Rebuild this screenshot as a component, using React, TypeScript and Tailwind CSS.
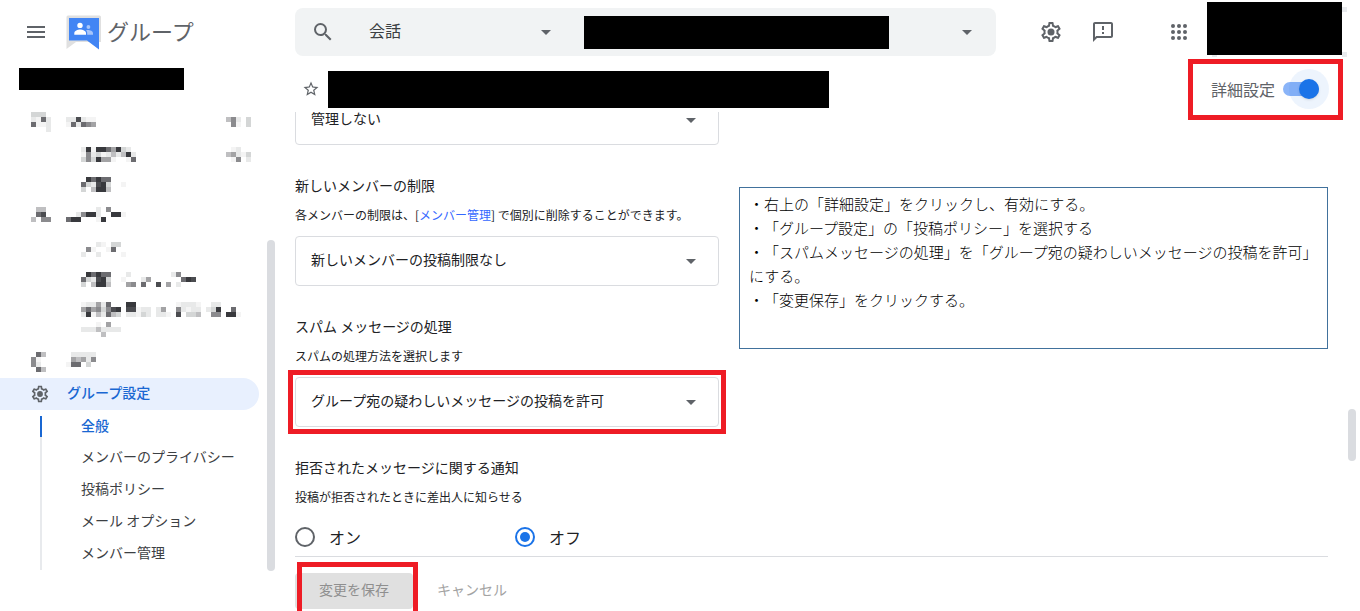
import { useState } from 'react';
import type { ReactNode } from 'react';
import { MdArrowDropDown, MdMenu, MdOutlineSmsFailed, MdSearch, MdStarBorder } from 'react-icons/md';

// [row, column, shades] - one run of 5px cells, '.' leaves a cell empty
type Run = [number, number, string];

const SHADES: Record<string, string> = {
  '1': '#f4f4f4',
  '2': '#e8e9e9',
  '3': '#d4d6d6',
  '4': '#bfbfc1',
  '5': '#a3a3a5',
  '6': '#8b8b8e',
  '7': '#6c6c70',
  '8': '#4b4c50',
  '9': '#38393d',
};

const hiddenTop: Run[][] = [
  [
    [0, 0, '333'], [1, 0, '2172'], [2, 0, '7112'], [3, 3, '2'],
    [1, 7, '228211'], [2, 7, '172765'], [1, 39, '462.3'], [2, 40, '61.3'],
  ],
  [
    [1, 10, '2919975932'], [2, 10, '16231242492'], [3, 10, '3639551..17'],
    [1, 40, '12'], [2, 39, '45213'], [3, 40, '16.2'],
  ],
  [[1, 11, '97977'], [2, 10, '732893..1'], [3, 10, '3.4994']],
  [
    [1, 1, '44'], [2, 1, '78'], [3, 0, '4.66'],
    [1, 13, '2.6'], [2, 9, '26992..991'], [3, 7, '799...19'],
  ],
];

const hiddenMiddle: Run[][] = [
  [[1, 13, '21.33'], [2, 11, '61..17'], [3, 10, '2..2....1']],
  [
    [1, 11, '97977...2'], [1, 28, '26'], [2, 10, '732893..1...25'], [2, 30, '798'],
    [3, 10, '3.4994...56.7..8.5.2'],
  ],
  [
    [1, 10, '122527...99'], [1, 29, '12221'], [1, 36, '22'],
    [2, 10, '57563689.88122.25'], [2, 29, '62122.239..7'],
    [3, 10, '29142743.22132.221'], [3, 29, '8.334..66.991'],
    [5, 13, '1.5'], [6, 10, '22242222'], [7, 14, '4'],
  ],
  [
    [1, 1, '74'], [1, 8, '22222'], [2, 0, '61'], [2, 8, '54526'],
    [3, 0, '62'], [3, 7, '177.3'], [4, 1, '74'],
  ],
];

const Mosaic = ({ runs, rows = 6 }: { runs: Run[]; rows?: number }) => (
  <svg
    width={225}
    height={rows * 5}
    viewBox={`0 0 45 ${rows}`}
    shapeRendering="crispEdges"
    className="ml-[31px] block"
    aria-hidden="true"
  >
    {runs.flatMap(([row, col, shades]) =>
      shades.split('').map((s, i) =>
        s === '.' ? null : (
          <rect key={`${row}-${col + i}`} x={col + i} y={row} width={1} height={1} fill={SHADES[s]} />
        )
      )
    )}
  </svg>
);

const GearIcon = ({ className }: { className?: string }) => (
  <svg viewBox="0 0 24 24" fill="currentColor" className={className} aria-hidden="true">
    <path d="M19.43 12.98c.04-.32.07-.64.07-.98 0-.34-.03-.66-.07-.98l2.11-1.65c.19-.15.24-.42.12-.64l-2-3.46a.5.5 0 0 0-.61-.22l-2.49 1c-.52-.4-1.08-.73-1.69-.98l-.38-2.65A.488.488 0 0 0 14 2h-4c-.25 0-.46.18-.49.42l-.38 2.65c-.61.25-1.17.59-1.69.98l-2.49-1a.566.566 0 0 0-.18-.03c-.17 0-.34.09-.43.25l-2 3.46c-.13.22-.07.49.12.64l2.11 1.65c-.04.32-.07.65-.07.98 0 .33.03.66.07.98l-2.11 1.65c-.19.15-.24.42-.12.64l2 3.46a.5.5 0 0 0 .61.22l2.49-1c.52.4 1.08.73 1.69.98l.38 2.65c.03.24.24.42.49.42h4c.25 0 .46-.18.49-.42l.38-2.65c.61-.25 1.17-.59 1.69-.98l2.49 1c.06.02.12.03.18.03.17 0 .34-.09.43-.25l2-3.46c.12-.22.07-.49-.12-.64l-2.11-1.65zm-1.98-1.71c.04.31.05.52.05.73 0 .21-.02.43-.05.73l-.14 1.13.89.7 1.08.84-.7 1.21-1.27-.51-1.04-.42-.9.68c-.43.32-.84.56-1.25.73l-1.06.43-.16 1.13-.2 1.35h-1.4l-.19-1.35-.16-1.13-1.06-.43c-.43-.18-.83-.41-1.23-.71l-.91-.7-1.06.43-1.27.51-.7-1.21 1.08-.84.89-.7-.14-1.13c-.03-.31-.05-.54-.05-.74s.02-.43.05-.73l.14-1.13-.89-.7-1.08-.84.7-1.21 1.27.51 1.04.42.9-.68c.43-.32.84-.56 1.25-.73l1.06-.43.16-1.13.2-1.35h1.39l.19 1.35.16 1.13 1.06.43c.43.18.83.41 1.23.71l.91.7 1.06-.43 1.27-.51.7 1.21-1.07.85-.89.7.14 1.13z" />
    <circle cx="12" cy="12" r="3.5" />
  </svg>
);

const AppsIcon = () => (
  <svg viewBox="0 0 24 24" fill="currentColor" className="size-6" aria-hidden="true">
    {[6, 12, 18].map((y) => [6, 12, 18].map((x) => <circle key={`${x}-${y}`} cx={x} cy={y} r="2" />))}
  </svg>
);

const GroupsLogo = () => (
  <svg viewBox="0 0 36 36" className="size-9" aria-hidden="true">
    <path d="M2 1.5h31.500a1.500 1.500 0 0 1 1.500 1.500v25H10L.5 35V3A1.500 1.500 0 0 1 2 1.500z" fill="#e0e0e0" />
    <path d="M3 4h30v31.500L21 26.500H3z" fill="#4285f4" />
    <circle cx="14" cy="11.400" r="2.700" fill="#fff" />
    <path d="M8.300 20.700v-1.700c0-2.200 3.500-3.600 5.800-3.600s5.900 1.400 5.900 3.600v1.700z" fill="#fff" />
    <circle cx="22.400" cy="13" r="1.900" fill="#a7c5fa" />
    <path d="M21.200 20.700v-1.500c0-1.400-.5-2.300-1.200-3 3-.6 7 .6 7 2.900v1.600z" fill="#a7c5fa" />
  </svg>
);

const Highlight = ({ className }: { className: string }) => (
  <span className={`pointer-events-none absolute border-5 border-[#ee1c25] ${className}`} />
);

const SelectBox = ({ label, value, children }: { label: string; value: string; children?: ReactNode }) => (
  <div className="relative">
    <select
      aria-label={label}
      className="block h-[50px] w-full appearance-none rounded border border-[#dadce0] bg-white px-[15px] pb-1 text-sm text-[#202124]"
    >
      <option>{value}</option>
    </select>
    <MdArrowDropDown className="pointer-events-none absolute top-[13px] right-4 size-6 text-[#5f6368]" />
    {children}
  </div>
);

const SettingText = ({ title, children }: { title: string; children: ReactNode }) => (
  <div className="mt-[30px]">
    <h2 className="text-sm leading-5">{title}</h2>
    <p className="mt-2.5 text-xs leading-5 whitespace-nowrap">{children}</p>
  </div>
);

const Radio = ({ label, checked, onChange }: { label: string; checked: boolean; onChange: () => void }) => (
  <label className="flex w-[220px] shrink-0 items-center gap-3.5 text-base leading-6">
    <input
      type="radio"
      name="rejected-notice"
      checked={checked}
      onChange={onChange}
      className="size-5 appearance-none rounded-full border-2 border-[#5f6368] bg-clip-content p-[3px] checked:border-[#1a73e8] checked:bg-[#1a73e8]"
    />
    {label}
  </label>
);

const Header = () => (
  <header className="flex h-16 shrink-0 items-center text-[#5f6368]">
    <div className="flex w-[295px] shrink-0 items-center pl-6">
      <button aria-label="メニュー">
        <MdMenu className="size-6" />
      </button>
      <a href="#" className="ml-[18px] flex items-center gap-[5px] text-[22px] leading-8">
        <GroupsLogo />
        <span className="pb-1">グループ</span>
      </a>
    </div>

    <div className="flex h-12 w-[701px] items-center rounded-lg bg-[#f1f3f4]">
      <MdSearch className="ml-4 size-6 shrink-0" />
      <div className="relative ml-[34px] w-[189px]">
        <select aria-label="検索対象" className="block h-8 w-full appearance-none pb-1 text-base text-[#3c4043]">
          <option>会話</option>
        </select>
        <MdArrowDropDown className="pointer-events-none absolute top-1 right-0 size-6" />
      </div>
      <div className="ml-[26px] h-[33px] w-[305px] bg-black" />
      <button aria-label="検索オプション" className="mr-[17px] ml-auto">
        <MdArrowDropDown className="size-6" />
      </button>
    </div>

    <div className="ml-auto flex items-center pr-[18px]">
      <button aria-label="設定">
        <GearIcon className="size-6" />
      </button>
      <button aria-label="フィードバック" className="ml-7">
        <MdOutlineSmsFailed className="size-6" />
      </button>
      <button aria-label="アプリ" className="ml-[52px]">
        <AppsIcon />
      </button>
      <div className="relative mb-2 ml-4 h-[53px] w-[135px] bg-black">
        {/* corners of the account chip left visible around the cover */}
        <span className="absolute top-[5px] -right-[5px] size-[5px] bg-[#e8eaed]" />
        <span className="absolute -right-[5px] -bottom-0.5 size-[5px] bg-[#e8eaed]" />
        <span className="absolute -bottom-0.5 left-[5px] h-0.5 w-[5px] bg-[#e8eaed]" />
      </div>
    </div>
  </header>
);

const subItems = ['メンバーのプライバシー', '投稿ポリシー', 'メール オプション', 'メンバー管理'];

const Sidebar = () => (
  <nav className="relative w-[278px] shrink-0 pt-1">
    <div className="ml-[19px] h-[22px] w-[165px] bg-black" />
    <ul className="mt-[22px]">
      {hiddenTop.map((runs, i) => (
        <li key={i}>
          <Mosaic runs={runs} />
        </li>
      ))}
    </ul>
    <ul className="mt-[5px]">
      {hiddenMiddle.map((runs, i) => (
        <li key={i}>
          <Mosaic runs={runs} rows={i === 2 ? 10 : 6} />
        </li>
      ))}
    </ul>
    <a
      href="#"
      className="mt-px mr-[19px] flex h-8 items-center rounded-r-full bg-[#e8f0fe] pl-[30px] text-sm font-medium text-[#1967d2]"
    >
      <GearIcon className="mr-[17px] size-5 text-[#5f6368]" />
      <span className="pb-1">グループ設定</span>
    </a>
    <ul className="mt-1.5 ml-10 border-l-2 border-[#e8eaed] text-sm text-[#3c4043]">
      <li className="mb-[5px] -ml-0.5 border-l-2 border-[#1967d2]">
        <a href="#" className="flex h-[21px] items-center pb-1 pl-[39px] font-medium text-[#1967d2]">
          全般
        </a>
      </li>
      {subItems.map((item) => (
        <li key={item}>
          <a href="#" className="flex h-8 items-center pb-1 pl-[39px] last:pb-1">
            {item}
          </a>
        </li>
      ))}
    </ul>
    <div className="absolute top-44 right-[3px] h-[331px] w-2 rounded-full bg-[#dadce0]" />
  </nav>
);

const AdvancedToggle = () => {
  const [on, setOn] = useState(true);

  return (
    <label className="relative ml-auto flex items-center gap-2 text-base text-[#5f6368]">
      詳細設定
      <span className={`relative h-3.5 w-9 rounded-full ${on ? 'bg-[#8ab4f8]' : 'bg-gray-300'}`}>
        <input
          type="checkbox"
          role="switch"
          checked={on}
          onChange={(e) => setOn(e.target.checked)}
          className="absolute inset-0 opacity-0"
        />
        <span className="absolute -top-[13px] -right-2.5 size-10 rounded-full bg-[#1a73e8]/8" />
        <span className="absolute -top-[3px] right-0 size-5 rounded-full bg-[#1a73e8] shadow" />
      </span>
      <Highlight className="-top-[18px] -right-6 -bottom-[19px] -left-[23px]" />
    </label>
  );
};

const App = () => {
  const [notify, setNotify] = useState('off');

  return (
    <div className="relative flex h-screen flex-col overflow-hidden bg-white font-['Noto_Sans_CJK_JP',sans-serif] text-[#202124]">
      <Header />
      <div className="flex min-h-0 flex-1">
        <Sidebar />

        <main className="flex min-w-0 flex-1 flex-col">
          <div className="relative z-10 flex h-12 shrink-0 items-center pt-0.5 pr-[41px] pl-6">
            <button aria-label="お気に入り" className="text-[#5f6368]">
              <MdStarBorder className="size-[18px]" />
            </button>
            <div className="ml-2 h-[37px] w-[501px] bg-black" />
            <AdvancedToggle />
          </div>

          <div className="flex min-h-0 flex-1 gap-5 overflow-hidden pr-8 pl-[17px]">
            <section className="-mt-[17px] w-[424px] shrink-0">
              <SelectBox label="モデレーション" value="管理しない" />

              <SettingText title="新しいメンバーの制限">
                各メンバーの制限は、[
                <a href="#" className="text-[#3367ff]">
                  メンバー管理
                </a>
                ] で個別に削除することができます。
              </SettingText>
              <div className="mt-[11px]">
                <SelectBox label="新しいメンバーの制限" value="新しいメンバーの投稿制限なし" />
              </div>

              <SettingText title="スパム メッセージの処理">スパムの処理方法を選択します</SettingText>
              <div className="mt-[11px]">
                <SelectBox label="スパム メッセージの処理" value="グループ宛の疑わしいメッセージの投稿を許可">
                  <Highlight className="-inset-[7px]" />
                </SelectBox>
              </div>

              <SettingText title="拒否されたメッセージに関する通知">
                投稿が拒否されたときに差出人に知らせる
              </SettingText>
              <div className="mt-[18px] flex">
                <Radio label="オン" checked={notify === 'on'} onChange={() => setNotify('on')} />
                <Radio label="オフ" checked={notify === 'off'} onChange={() => setNotify('off')} />
              </div>
            </section>

            <aside className="mt-[75px] min-h-[162px] flex-1 self-start border border-[#41719c] py-1 pr-1.5 pl-[9px] text-[15px] leading-6 font-light text-black [text-spacing-trim:space-all]">
              <p>・右上の「詳細設定」をクリックし、有効にする。</p>
              <p>・「グループ設定」の「投稿ポリシー」を選択する</p>
              <p>・「スパムメッセージの処理」を「グループ宛の疑わしいメッセージの投稿を許可」にする。</p>
              <p>・「変更保存」をクリックする。</p>
            </aside>
          </div>

          <footer className="mr-8 ml-[17px] flex h-[55px] shrink-0 items-start border-t border-[#dadce0] pt-4 text-sm">
            <div className="relative">
              <button disabled className="h-9 w-[118px] rounded bg-[#e0e0e0] pb-1 text-[#8f8f8f]">
                変更を保存
              </button>
              <Highlight className="-top-[11px] -right-[5px] -bottom-3 left-0.5" />
            </div>
            <button disabled className="h-9 px-6 pb-1 text-[#a3a3a3]">
              キャンセル
            </button>
          </footer>
        </main>
      </div>

      <div className="absolute top-[409px] right-1 h-[52px] w-2 rounded-full bg-[#dadce0]" />
    </div>
  );
};

export default App;
